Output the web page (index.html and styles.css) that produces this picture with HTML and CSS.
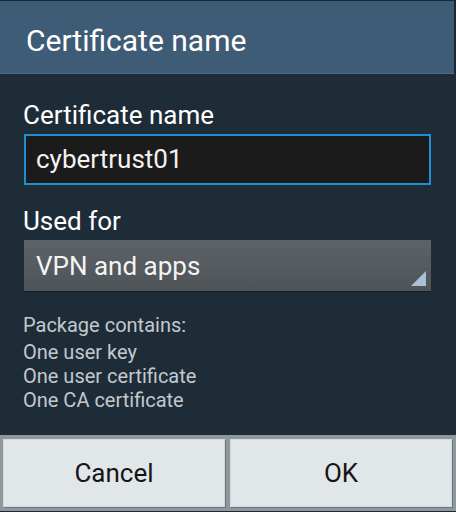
FILE: index.html
```html
<!DOCTYPE html>
<html>
<head>
<meta charset="utf-8">
<title>Certificate name</title>
<link rel="stylesheet" href="styles.css">
</head>
<body>
<div class="dialog">
	<div class="dlgTitle">Certificate name</div>
	<div class="dlgBody">
		<div class="fieldLabel">Certificate name</div>
		<div class="editBox">cybertrust01</div>
		<div class="fieldLabel usedFor">Used for</div>
		<div class="spinner">
			<span>VPN and apps</span>
			<span class="spinArrow"></span>
		</div>
		<div class="pkgInfo">
			<div class="pkgTitle">Package contains:</div>
			<div>One user key</div>
			<div>One user certificate</div>
			<div>One CA certificate</div>
		</div>
	</div>
	<div class="btnBar">
		<button class="dlgBtn">Cancel</button>
		<button class="dlgBtn">OK</button>
	</div>
</div>
</body>
</html>
```

FILE: styles.css
```css
body{
	margin:0;
	background:#1c2934;
	font-family:Roboto, "Liberation Sans", sans-serif;
}
.dialog{
	width:456px;
	height:512px;
	overflow:hidden;
}
.dlgTitle{
	height:74px;
	margin-right:2px;
	box-sizing:border-box;
	border-top:1px solid #1b2733;
	border-bottom:1px solid #4b6a86;
	padding:22px 0 0 26px;
	background:#3f5c77;
	color:#ffffff;
	font-size:30px;
	line-height:35px;
}
.dlgBody{
	height:361px;
	box-sizing:border-box;
	padding:26px 25px 0 24px;
	background:#1e2c38;
}
.fieldLabel{
	color:#ffffff;
	font-size:26px;
	line-height:30px;
	margin-left:-1px;
}
.usedFor{
	margin-top:21px;
}
.editBox{
	margin-top:4px;
	height:51px;
	box-sizing:border-box;
	border:2px solid #1f8ed3;
	background:#1b1b1b;
	color:#f2f2f2;
	font-size:26px;
	line-height:30px;
	padding:8px 0 0 10px;
}
.spinner{
	margin-top:4px;
	height:51px;
	box-sizing:border-box;
	display:flex;
	justify-content:space-between;
	align-items:center;
	padding:0 5px 0 12px;
	background:linear-gradient(#5c6267, #4f5459);
	box-shadow:0 1px 0 #141c23;
	color:#f4f4f4;
	font-size:26px;
	line-height:30px;
}
.spinArrow{
	align-self:flex-end;
	margin-bottom:5px;
	width:0;
	height:0;
	border-left:15px solid transparent;
	border-bottom:15px solid #a9c0d7;
}
.pkgInfo{
	margin-top:22px;
	margin-left:-1px;
	color:#c3c9cd;
	font-size:20px;
	line-height:24px;
}
.pkgTitle{
	margin-bottom:3px;
}
.btnBar{
	height:76px;
	box-sizing:border-box;
	display:grid;
	grid-template-columns:222px 222px;
	column-gap:5px;
	padding:4px 4px 4px 3px;
	background:#8e979c;
}
.dlgBtn{
	margin:0;
	border:1px solid #d3d9dc;
	box-shadow:1px 1px 0 #6c757a;
	background:#e1e6e9;
	color:#151515;
	font-family:Roboto, "Liberation Sans", sans-serif;
	font-size:26px;
	line-height:30px;
	padding:0;
}
```
